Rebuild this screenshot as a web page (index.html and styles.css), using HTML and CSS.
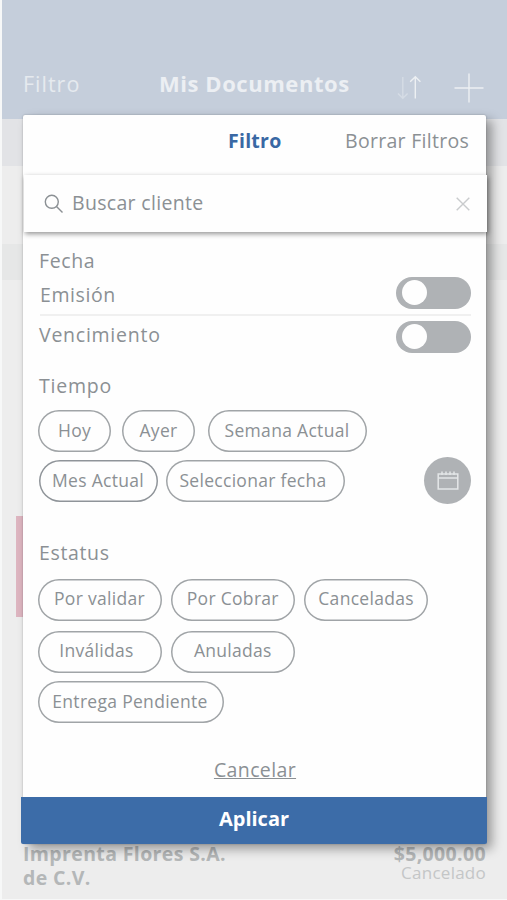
FILE: index.html
```html
<!DOCTYPE html>
<html lang="es">
<head>
<meta charset="utf-8">
<title>Mis Documentos</title>
<link rel="stylesheet" href="styles.css">
</head>
<body>
<div class="screen">
  <header class="topbar">
    <span class="topbar-filter">Filtro</span>
    <span class="topbar-title">Mis Documentos</span>
    <svg class="icon-sort" width="26" height="26" viewBox="0 0 26 26"><path class="faint" d="M6.800 2v21M2 18.500l4.800 4.800 4.800-4.800"/><path d="M19.300 23.500V1.500M14.200 6.800l5.100-5.100 5.100 5.100"/></svg>
    <svg class="icon-plus" width="30" height="30" viewBox="0 0 30 30"><path d="M15 .5v29M.5 15h29"/></svg>
  </header>
  <div class="band band-top"></div>
  <div class="band band-row"></div>
  <div class="band band-date"></div>
  <div class="list"><div class="marker"></div></div>
  <div class="document">
    <div class="client">Imprenta Flores S.A.<br>de C.V.</div>
    <div class="total"><div class="amount">$5,000.00</div><div class="state">Cancelado</div></div>
  </div>
</div>

<section class="modal">
  <div class="modal-head">
    <span></span>
    <h1>Filtro</h1>
    <a class="clear">Borrar Filtros</a>
  </div>
  <div class="search">
    <svg width="20" height="20" viewBox="0 0 20 20"><circle cx="7.800" cy="7.800" r="6.500"/><path d="M12.500 12.500 18.500 18.500"/></svg>
    <span class="search-text">Buscar cliente</span>
    <svg class="close" width="14" height="14" viewBox="0 0 14 14"><path d="M.7.700l12.600 12.600M13.300.7.700 13.300"/></svg>
  </div>
  <div class="content">
    <h2 class="date-title">Fecha</h2>
    <div class="switch-row first"><span class="t-emision">Emisión</span><i class="switch"></i></div>
    <div class="switch-row"><span class="t-venc">Vencimiento</span><i class="switch"></i></div>
    <h2 class="time-title">Tiempo</h2>
    <div class="time-line one">
      <button class="pill w-day"><span>Hoy</span></button>
      <button class="pill w-day"><span>Ayer</span></button>
      <button class="pill w-week"><span>Semana Actual</span></button>
    </div>
    <div class="time-line two">
      <button class="pill w-month dark"><span>Mes Actual</span></button>
      <button class="pill w-pick"><span>Seleccionar fecha</span></button>
      <div class="calendar"><svg width="22" height="20" viewBox="0 0 22 20"><path d="M1.200 4h19.600v15H1.200zM1.200 8h19.600M5 1.500v3.500M9 1.500v3.500M13 1.500v3.500M17 1.500v3.500"/></svg></div>
    </div>
    <h2 class="status-title">Estatus</h2>
    <div class="status-grid">
      <button class="pill"><span>Por validar</span></button>
      <button class="pill"><span>Por Cobrar</span></button>
      <button class="pill"><span>Canceladas</span></button>
      <button class="pill nudge-left"><span>Inválidas</span></button>
      <button class="pill"><span>Anuladas</span></button>
    </div>
    <button class="pill w-delivery"><span>Entrega Pendiente</span></button>
    <a class="cancel">Cancelar</a>
  </div>
  <button class="apply">Aplicar</button>
</section>
</body>
</html>
```
FILE: styles.css
```css
* { box-sizing: border-box; }
body {
  margin: 0;
  width: 507px;
  height: 900px;
  overflow: hidden;
  position: relative;
  font-family: "Open Sans", "Noto Sans", sans-serif;
  font-size: 19.5px;
  color: #8b9094;
  background: #f7f8f8;
}
svg { fill: none; stroke: #8b9094; stroke-width: 1.4; display: block; }
h1, h2 { margin: 0; font-size: inherit; font-weight: 400; }
button { font: inherit; color: inherit; padding: 0; margin: 0; border: 0; background: none; }

.screen { margin-left: 2px; height: 899px; display: flex; flex-direction: column; background: #ededed; }
.topbar {
  height: 119px;
  flex: none;
  background: #c5cedb;
  display: flex;
  align-items: center;
  padding: 50px 0 0 21px;
  color: #e6eaef;
}
.topbar span { margin-top: -3px; }
.topbar-filter { width: 136px; font-size: 21.5px; letter-spacing: 1px; }
.topbar-title { width: 237px; font-size: 22px; font-weight: 700; letter-spacing: 0.55px; color: #eceff3; }
.topbar svg { stroke: #edf0f3; flex: none; margin-top: 6px; }
.topbar .faint { stroke: #d5dce5; }
.topbar .icon-plus { margin: 6px 0 0 32px; }
.band { flex: none; }
.band-top { height: 47px; background: #e2e3e6; }
.band-row { height: 78px; }
.band-date { height: 36px; background: #e6e7e7; }
.list { flex: 1; padding: 236px 0 0 14px; }
.marker { width: 10px; height: 101px; background: #ddb5c0; }
.document {
  height: 58px;
  flex: none;
  display: flex;
  justify-content: space-between;
  padding: 1px 21px 0 21px;
  line-height: 24px;
  color: #b4b7b8;
}
.client, .amount { font-weight: 700; }
.client { letter-spacing: 0.37px; }
.amount { letter-spacing: 0.35px; }
.total { text-align: right; }
.state { font-size: 17px; line-height: 14px; letter-spacing: 0.25px; color: #c4c6c7; }

.modal {
  position: absolute;
  left: 23px;
  top: 115px;
  width: 463px;
  height: 729px;
  display: flex;
  flex-direction: column;
  background: #fefefe;
  border-radius: 2px;
  box-shadow: 6px 5px 11px rgba(0, 0, 0, 0.36), 0 0 2px rgba(0, 0, 0, 0.25);
}
.modal-head {
  height: 60px;
  flex: none;
  display: grid;
  grid-template-columns: 205px 117px 1fr;
  line-height: 51px;
}
.modal-head h1 { font-weight: 700; letter-spacing: 0.25px; color: #3968a4; }
.clear { white-space: nowrap; letter-spacing: 0.3px; }
.search {
  height: 57px;
  flex: none;
  margin: 0 -1px 0 1px;
  padding: 0 17px 0 20px;
  display: flex;
  align-items: center;
  background: #fefefe;
  box-shadow: 1px 2px 5px rgba(0, 0, 0, 0.42);
}
.search-text { flex: 1; margin-left: 8px; margin-top: -3px; letter-spacing: 0.32px; }
.search .close { stroke: #c9cbcd; }

.content { flex: 1; padding: 0 15px 0 16px; display: flex; flex-direction: column; }
.date-title { margin-top: 16px; line-height: 26px; letter-spacing: 0.6px; }
.switch-row { height: 42px; flex: none; display: flex; justify-content: space-between; align-items: center; letter-spacing: 0.6px; }
.switch-row span { margin-top: -6px; }
.switch-row .t-venc { letter-spacing: 0.75px; }
.switch-row.first { border-bottom: 2px solid #f0f0f0; margin-left: 1px; }
.switch-row.first span { margin-top: 0; }
.switch-row.first .switch { margin-top: -3px; }
.switch {
  width: 75px;
  height: 32px;
  border-radius: 16px;
  background: #afb2b5;
  padding: 3px 6px;
  margin-top: -1px;
}
.switch::before { content: ""; display: block; width: 25px; height: 25px; border-radius: 50%; background: #fefefe; }
.time-title { margin-top: 15px; line-height: 26px; letter-spacing: 0.8px; }
.pill {
  height: 42px;
  flex: none;
  border-radius: 21px;
  box-shadow: inset 0 0 0 1.5px #a0a4a7;
  font-size: 17.5px;
  line-height: 36px;
  padding-bottom: 3px;
  white-space: nowrap;
  letter-spacing: 0.3px;
}
.time-line { display: flex; align-items: center; flex: none; }
.one { margin: 11px 0 0 -1px; }
.w-day { width: 73px; margin-right: 11px; }
.w-week { width: 159px; margin-left: 2px; padding-right: 1px; }
.two { height: 50px; margin-top: 4px; }
.w-month { width: 119px; margin-right: 8px; padding-right: 1px; }
.w-pick { width: 179px; padding-right: 5px; }
.dark { box-shadow: inset 0 0 0 1.5px #8f9499; }
.calendar {
  width: 47px;
  height: 47px;
  margin: -2px 0 0 auto;
  border-radius: 50%;
  background: #afb2b5;
  display: grid;
  place-items: center;
}
.calendar svg { stroke: #e4e6e7; stroke-width: 1.5; }
.status-title { margin-top: 34px; line-height: 26px; letter-spacing: 0.65px; }
.status-grid {
  display: grid;
  grid-template-columns: repeat(3, 124px);
  gap: 10px 9.300px;
  margin: 13px 0 0 -1.500px;
}
.status-grid .pill { padding-bottom: 5px; }
.nudge-left { padding-right: 6px; }
.w-delivery { width: 186px; margin: 8px 0 0 -1px; padding-right: 2px; }
.cancel {
  align-self: center;
  margin-top: 34px;
  line-height: 26px;
  letter-spacing: 0.38px;
  text-decoration: underline;
  text-decoration-thickness: 1px;
}
.apply {
  height: 47px;
  flex: none;
  margin: 0 -1px 0 -2px;
  background: #3c6ca8;
  color: #fff;
  font-weight: 700;
  font-size: 20px;
  padding-bottom: 4px;
  border-radius: 0 0 2px 2px;
}
```
